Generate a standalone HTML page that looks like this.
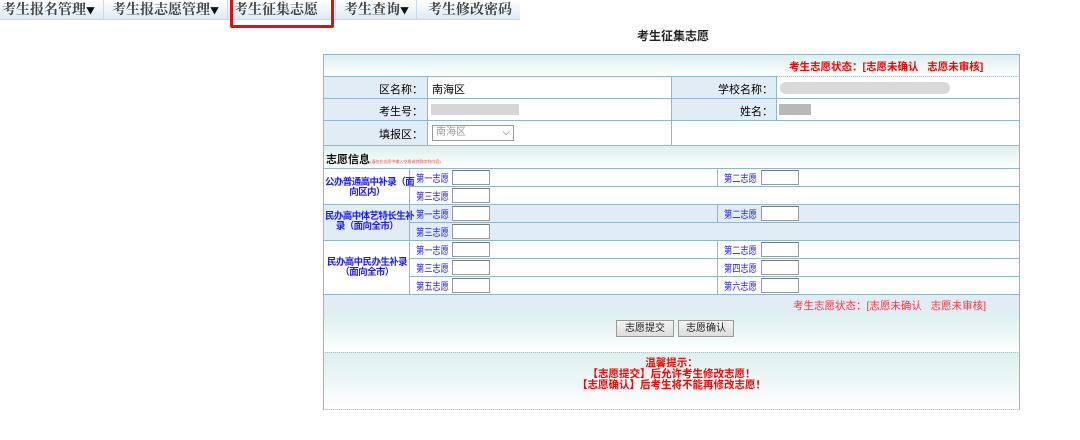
<!DOCTYPE html>
<html><head><meta charset="utf-8"><style>
*{margin:0;padding:0;box-sizing:border-box}
body{width:1080px;height:440px;background:#fff;font-family:"Liberation Sans","Noto Sans CJK SC",sans-serif;position:relative;overflow:hidden;font-size:12px}
.nav{position:absolute;left:0;top:0;width:520px;height:20px;background:linear-gradient(#fff,#dbeaf6);border-bottom:1px solid #c9dbe9}
.nav span{position:absolute;top:0;height:20px;line-height:18px;font-family:"Noto Serif CJK SC",serif;font-size:14px;color:#444;font-weight:bold;border-right:1px solid #c9dbe9;white-space:nowrap}
.nav i{font-style:normal;font-size:9px;color:#111}
.red{position:absolute;left:230px;top:-3px;width:104px;height:31px;border:3px solid #e01010;border-radius:2px}
.title{position:absolute;left:637px;top:27px;font-size:12px;font-weight:bold;color:#222}
.a{position:absolute;border:1px solid #8fb8d0}
.hd{background:linear-gradient(#dcefee,#fff)}
.lb{background:#e1ecf5}
.c{position:absolute;font-size:11px;white-space:nowrap}
.r{text-align:right}
.in{position:absolute;width:38px;height:15px;border:1px solid #999;border-top-color:#777;background:#fff}
.bl{color:#1a1aff;font-size:10px;line-height:12px;transform:scaleX(0.82);transform-origin:left}
.cat{position:absolute;color:#1a1aff;font-size:9.5px;font-weight:bold;text-align:center;line-height:10px;letter-spacing:-0.6px;white-space:nowrap}
.btn{position:absolute;top:320px;height:17px;border:1px solid #999;background:linear-gradient(#f4f4f4,#ddd);font-size:10px;line-height:15px;text-align:center;color:#222}
</style></head><body>
<div class="nav">
<span style="left:2px;width:102px">考生报名管理<i>▼</i></span>
<span style="left:104px;width:124px;padding-left:8px">考生报志愿管理<i>▼</i></span>
<span style="left:228px;width:108px;padding-left:6px">考生征集志愿</span>
<span style="left:336px;width:81px;padding-left:8px">考生查询<i>▼</i></span>
<span style="left:417px;width:103px;padding-left:11px;border:none">考生修改密码</span>
</div>
<div class="red"></div>
<div class="title">考生征集志愿</div>

<div class="a" style="left:323px;top:54px;width:697px;height:356px;border-bottom:none"></div>
<div class="a hd" style="left:323px;top:54px;width:697px;height:23px;border-bottom:1px dotted #bbb"></div>
<div class="c" style="left:789px;top:59px;color:#f00;font-weight:bold;font-size:10.5px">考生志愿状态：[志愿未确认 &nbsp; 志愿未审核]</div>

<div class="a lb" style="left:323px;top:76px;width:105px;height:70px"></div>
<div class="a lb" style="left:671px;top:76px;width:106px;height:45px"></div>
<div class="a" style="left:323px;top:98px;width:697px;height:23px;border-left:none;border-right:none"></div>
<div class="a" style="left:427px;top:76px;width:245px;height:70px"></div>
<div class="c r" style="left:330px;top:81px;width:93px">区名称：</div>
<div class="c" style="left:432px;top:81px">南海区</div>
<div class="c r" style="left:680px;top:81px;width:93px">学校名称：</div>
<div style="position:absolute;left:780px;top:82px;width:170px;height:12px;background:#d9d9d9;border-radius:6px"></div>
<div class="c r" style="left:330px;top:103px;width:93px">考生号：</div>
<div style="position:absolute;left:431px;top:104px;width:88px;height:11px;background:#d6d6d6"></div>
<div class="c r" style="left:680px;top:103px;width:93px">姓名：</div>
<div style="position:absolute;left:779px;top:104px;width:32px;height:11px;background:#b8b8b8"></div>
<div class="c r" style="left:330px;top:126px;width:93px">填报区：</div>
<div style="position:absolute;left:432px;top:125px;width:82px;height:16px;border:1px solid #999;font-size:10px;color:#999;padding-left:3px;line-height:14px">南海区<span style="float:right;padding-right:3px;color:#555">⌵</span></div>

<div class="a hd" style="left:323px;top:145px;width:697px;height:24px;border-bottom:1px dotted #bbb"></div>
<div class="c" style="left:326px;top:151px;font-weight:bold;color:#111">志愿信息<span style="font-size:4px;color:#f44;font-weight:normal">(请勿在志愿中输入空格或特殊字符内容)</span></div>

<div class="a" style="left:323px;top:168px;width:697px;height:37px"></div>
<div class="a lb" style="left:323px;top:204px;width:697px;height:37px"></div>
<div class="a" style="left:323px;top:240px;width:697px;height:55px"></div>
<div class="a" style="left:409px;top:186px;width:611px;height:19px;border-bottom:none"></div>
<div class="a" style="left:409px;top:222px;width:611px;height:19px;border-bottom:none"></div>
<div class="a" style="left:409px;top:258px;width:611px;height:19px"></div>
<div class="a" style="left:409px;top:168px;width:1px;height:127px;border-width:0 0 0 1px"></div>
<div class="a" style="left:717px;top:168px;width:1px;height:19px;border-width:0 0 0 1px"></div>
<div class="a" style="left:717px;top:204px;width:1px;height:19px;border-width:0 0 0 1px"></div>
<div class="a" style="left:717px;top:240px;width:1px;height:55px;border-width:0 0 0 1px"></div>

<div class="cat" style="left:325px;top:178px;width:84px">公办普通高中补录（面<br>向区内）</div>
<div class="cat" style="left:325px;top:212px;width:84px">民办高中体艺特长生补<br>录（面向全市）</div>
<div class="cat" style="left:325px;top:258px;width:84px">民办高中民办生补录<br>（面向全市）</div>

<div class="c bl" style="left:416px;top:174px">第一志愿</div><div class="in" style="left:452px;top:170px"></div>
<div class="c bl" style="left:724px;top:174px">第二志愿</div><div class="in" style="left:761px;top:170px"></div>
<div class="c bl" style="left:416px;top:192px">第三志愿</div><div class="in" style="left:452px;top:188px"></div>
<div class="c bl" style="left:416px;top:210px">第一志愿</div><div class="in" style="left:452px;top:206px"></div>
<div class="c bl" style="left:724px;top:210px">第二志愿</div><div class="in" style="left:761px;top:206px"></div>
<div class="c bl" style="left:416px;top:228px">第三志愿</div><div class="in" style="left:452px;top:224px"></div>
<div class="c bl" style="left:416px;top:246px">第一志愿</div><div class="in" style="left:452px;top:242px"></div>
<div class="c bl" style="left:724px;top:246px">第二志愿</div><div class="in" style="left:761px;top:242px"></div>
<div class="c bl" style="left:416px;top:264px">第三志愿</div><div class="in" style="left:452px;top:260px"></div>
<div class="c bl" style="left:724px;top:264px">第四志愿</div><div class="in" style="left:761px;top:260px"></div>
<div class="c bl" style="left:416px;top:282px">第五志愿</div><div class="in" style="left:452px;top:278px"></div>
<div class="c bl" style="left:724px;top:282px">第六志愿</div><div class="in" style="left:761px;top:278px"></div>

<div class="a lb" style="left:323px;top:294px;width:697px;height:21px"></div>
<div class="c" style="left:793px;top:298px;color:#f33;font-size:10.5px">考生志愿状态：[志愿未确认 &nbsp; 志愿未审核]</div>
<div class="a hd" style="left:323px;top:314px;width:697px;height:39px;border-top:none;border-bottom:1px dotted #bbb"></div>
<div class="btn" style="left:616px;width:58px">志愿提交</div>
<div class="btn" style="left:678px;width:56px">志愿确认</div>
<div class="a hd" style="left:323px;top:353px;width:697px;height:57px;border-top:none;border-bottom:1px dotted #bbb"></div>
<div class="c" style="left:323px;top:358px;width:697px;text-align:center;color:#f00;font-weight:bold;line-height:11px;font-size:10.5px">温馨提示：<br>【志愿提交】后允许考生修改志愿！<br>【志愿确认】后考生将不能再修改志愿！</div>
</body></html>
